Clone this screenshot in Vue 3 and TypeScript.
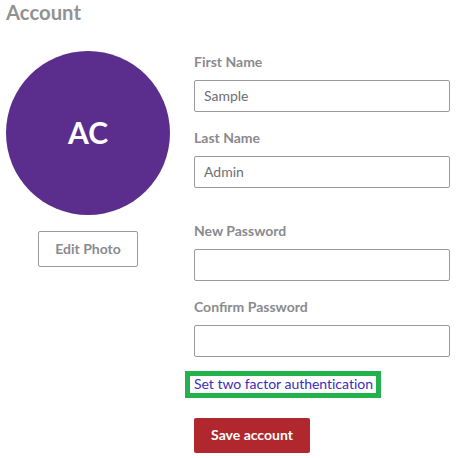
<script setup lang="ts">
interface Field { label: string; value: string; spaced?: boolean }
const fields: Field[] = [
  { label: 'First Name', value: 'Sample' },
  { label: 'Last Name', value: 'Admin' },
  { label: 'New Password', value: '', spaced: true },
  { label: 'Confirm Password', value: '' },
]
</script>

<template>
  <div class="page">
    <h1 class="title">Account</h1>
    <div class="content">
      <div class="side">
        <div class="avatar">AC</div>
        <button class="edit" type="button">Edit Photo</button>
      </div>
      <form class="form" @submit.prevent>
        <div v-for="f in fields" :key="f.label" class="field" :class="{ spaced: f.spaced }">
          <label class="label">{{ f.label }}</label>
          <input class="input" :value="f.value" />
        </div>
        <div class="two-factor"><a class="link" href="#">Set two factor authentication</a></div>
        <button class="save" type="submit">Save account</button>
      </form>
    </div>
  </div>
</template>

<style>
html, body { margin: 0; background: #fff; }
</style>

<style scoped>
.page {
  width: 457px;
  height: 458px;
  overflow: hidden;
  padding: 0 7px 0 6px;
  box-sizing: border-box;
  font-family: Lato, "Liberation Sans", sans-serif;
  color: #8a8a8f;
}
.title {
  margin: 0;
  height: 51px;
  font-size: 20.3px;
  line-height: 25px;
  font-weight: 700;
  color: #929292;
}
.content { display: flex; gap: 24px; }
.side { width: 164px; display: flex; flex-direction: column; align-items: center; gap: 16px; flex: none; }
.avatar {
  width: 164px;
  height: 164px;
  box-sizing: border-box;
  padding-bottom: 3px;
  border-radius: 50%;
  background: #5b2d8c;
  color: #fff;
  font-size: 30px;
  font-weight: 700;
  display: flex;
  align-items: center;
  justify-content: center;
}
.edit {
  width: 100px;
  height: 36px;
  box-sizing: border-box;
  padding: 0 0 2px;
  background: #fff;
  border: 1px solid #9a9a9f;
  border-radius: 2px;
  font: 700 14px Lato, sans-serif;
  color: #8a8a8f;
}
.form { flex: 1; display: flex; flex-direction: column; align-items: flex-start; padding-top: 1px; }
.field { width: 100%; display: flex; flex-direction: column; margin-bottom: 16.5px; }
.field.spaced { margin-top: 17px; }
.label { font-size: 14px; font-weight: 700; line-height: 20px; margin-bottom: 8px; color: #8a8a8f; }
.input {
  box-sizing: border-box;
  width: 100%;
  height: 31.5px;
  padding: 0 9px;
  border: 1px solid #9a9a9f;
  border-radius: 2px;
  font: 400 14px Lato, sans-serif;
  color: #6e6e73;
  background: #fff;
  outline: none;
}
.two-factor {
  margin: -2px 0 20px -9px;
  border: 5px solid #22b14c;
  padding: 0 3px 2px 4px;
  height: 15px;
  box-sizing: content-box;
  line-height: 15px;
  display: flex;
  align-items: center;
}
.link { font-size: 14px; color: #3a2fb8; text-decoration: none; white-space: nowrap; letter-spacing: -0.02px; }
.save {
  width: 116px;
  height: 34.7px;
  padding: 0 0 2px;
  border: none;
  border-radius: 2px;
  background: #b0282d;
  color: #fff;
  font: 700 14px Lato, sans-serif;
}
</style>
